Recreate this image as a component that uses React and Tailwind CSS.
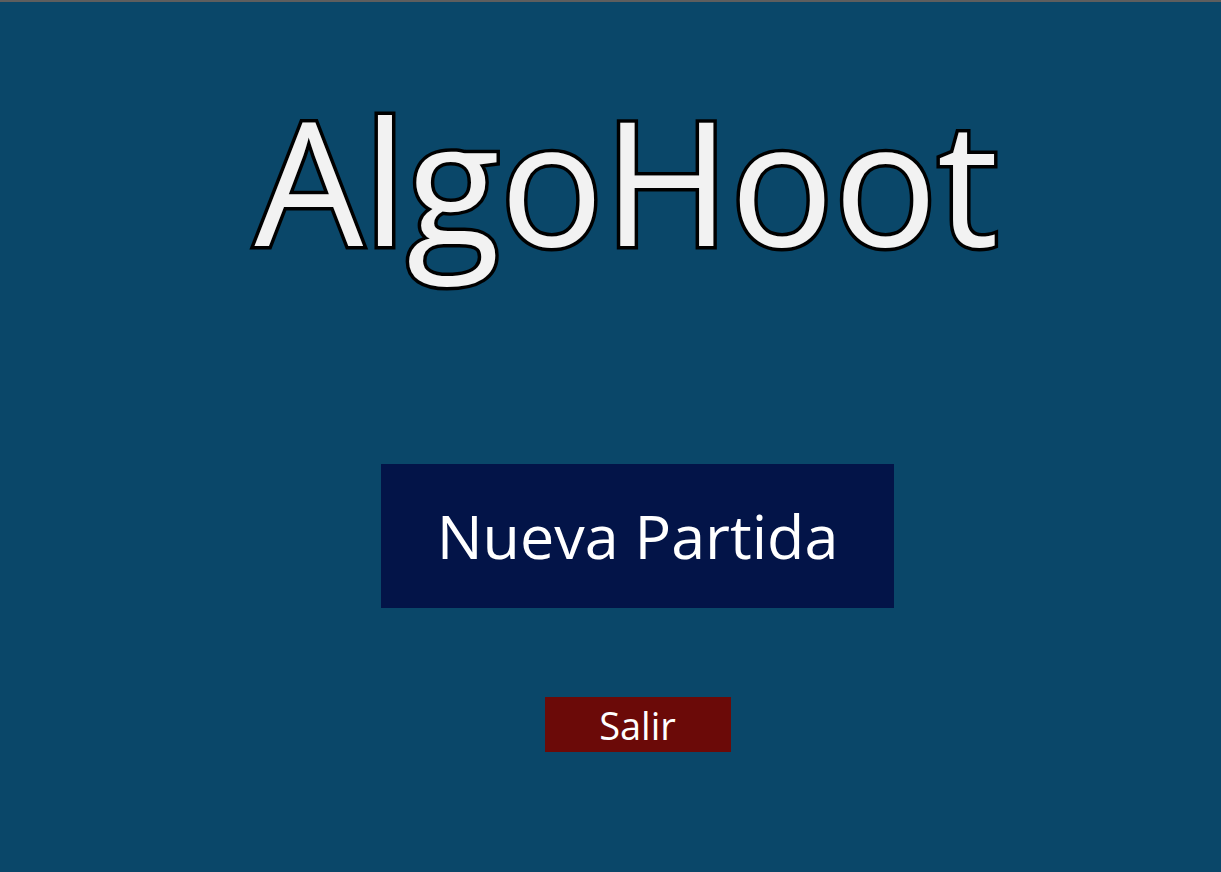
import React from 'react'

const App = () => {
  return (
    <div className="h-[872px] w-full bg-[#0a4769] border-t-2 border-[#5e5e5e] flex flex-col items-center font-['Open_Sans',sans-serif]">
      {/* Title */}
      <h1 className="mt-[77px] ml-[32px] text-[172px] leading-[200px] text-[#f2f2f2] [-webkit-text-stroke:7px_black] [paint-order:stroke_fill]">
        AlgoHoot
      </h1>

      {/* Menu */}
      <div className="ml-[54px] flex flex-col items-center">
        <button className="mt-[185px] w-[513px] h-[144px] bg-[#031448] text-white text-[61px] flex items-center justify-center">
          Nueva Partida
        </button>
        <button className="mt-[89px] w-[186px] h-[55px] bg-[#6b0a08] text-white text-[38px] leading-none flex items-center justify-center">
          Salir
        </button>
      </div>
    </div>
  )
}

export default App
